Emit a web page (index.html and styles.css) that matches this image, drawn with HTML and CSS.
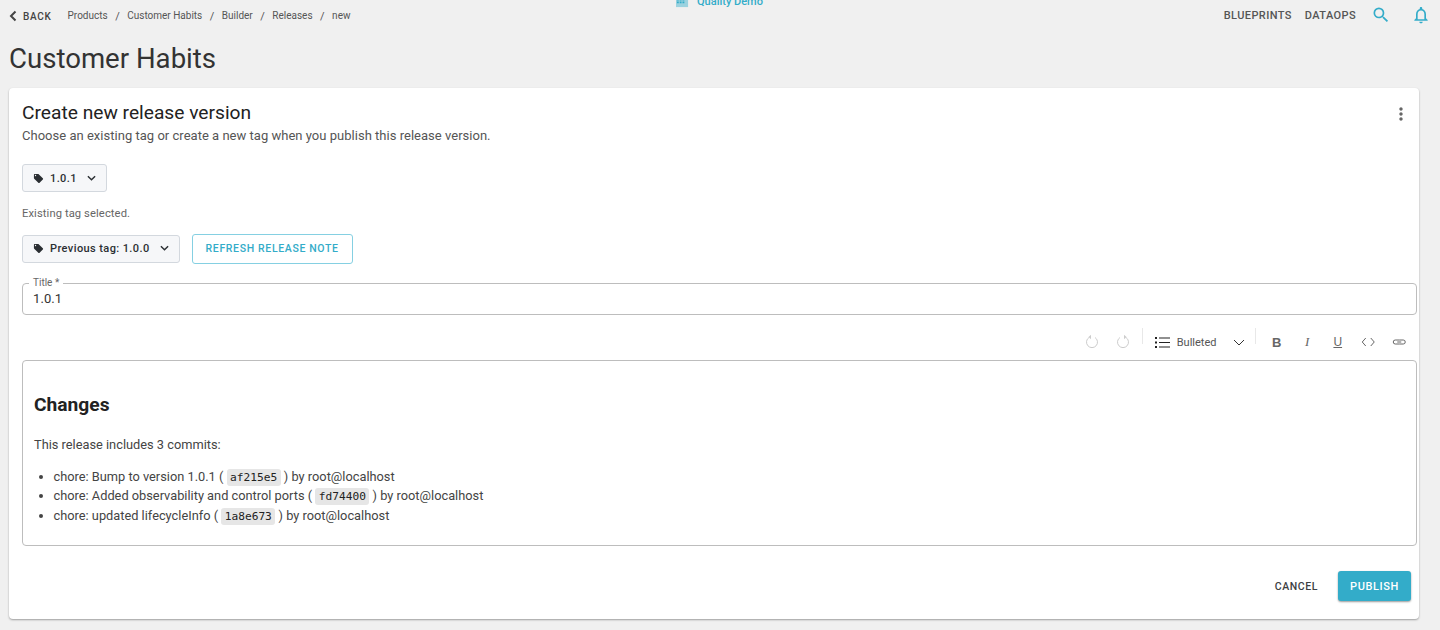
FILE: index.html
```html
<!DOCTYPE html>
<html lang="en">
<head>
<meta charset="utf-8">
<title>Customer Habits</title>
<link rel="stylesheet" href="styles.css">
</head>
<body>
<header class="topbar">
  <div class="nav-left">
    <a class="back"><svg class="back-icon" viewBox="0 0 8 12"><path d="M6.5 1.5 2 6l4.500 4.500" fill="none" stroke="currentColor" stroke-width="2"/></svg>BACK</a>
    <nav class="crumbs"><span>Products</span><i>/</i><span>Customer Habits</span><i>/</i><span>Builder</span><i>/</i><span>Releases</span><i>/</i><span>new</span></nav>
  </div>
  <div class="env">
    <svg class="env-icon" viewBox="0 0 14 14"><path fill="currentColor" d="M0 0h13v13H0z" opacity=".45"/><path fill="currentColor" d="M1 1h2v2H1zM4 1h2v2H4zM7 1h2v2H7zM10 1h2v2h-2zM1 4h2v2H1zM4 4h2v2H4zM7 4h2v2H7zM1 7h2v2H1zM4 7h2v2H4zM7 7h2v2H7z"/></svg>
    <span>Quality Demo</span>
  </div>
  <div class="nav-right">
    <a class="nav-link">BLUEPRINTS</a>
    <a class="nav-link">DATAOPS</a>
    <svg class="search" viewBox="0 0 24 24"><path fill="currentColor" d="M15.500 14h-.79l-.28-.27A6.470 6.470 0 0 0 16 9.500 6.500 6.500 0 1 0 9.500 16c1.610 0 3.090-.59 4.230-1.570l.27.28v.79l5 4.990L20.490 19l-4.990-5zm-6 0C7.010 14 5 11.990 5 9.500S7.010 5 9.500 5 14 7.010 14 9.500 11.990 14 9.500 14z"/></svg>
    <svg class="bell" viewBox="0 0 24 24"><path fill="currentColor" d="M12 22c1.100 0 2-.9 2-2h-4c0 1.100.9 2 2 2zm6-6v-5c0-3.070-1.630-5.640-4.500-6.320V4c0-.83-.67-1.500-1.500-1.500s-1.500.67-1.500 1.500v.68C7.640 5.360 6 7.920 6 11v5l-2 2v1h16v-1l-2-2zm-2 1H8v-6c0-2.480 1.510-4.500 4-4.500s4 2.020 4 4.500v6z"/></svg>
  </div>
</header>

<h1 class="page-title">Customer Habits</h1>

<main class="card">
  <div class="card-head">
    <div>
      <h2 class="card-title">Create new release version</h2>
      <p class="card-sub">Choose an existing tag or create a new tag when you publish this release version.</p>
    </div>
    <svg class="more" viewBox="0 0 24 24"><path fill="currentColor" d="M12 8c1.100 0 2-.9 2-2s-.9-2-2-2-2 .9-2 2 .9 2 2 2zm0 2c-1.100 0-2 .9-2 2s.9 2 2 2 2-.9 2-2-.9-2-2-2zm0 6c-1.100 0-2 .9-2 2s.9 2 2 2 2-.9 2-2-.9-2-2-2z"/></svg>
  </div>

  <button class="tag-btn tag-first">
    <svg class="tag-icon" viewBox="0 0 24 24"><path fill="currentColor" d="M21.410 11.580l-9-9C12.050 2.220 11.550 2 11 2H4c-1.100 0-2 .9-2 2v7c0 .55.22 1.050.59 1.420l9 9c.36.36.86.58 1.410.58.55 0 1.050-.22 1.410-.59l7-7c.37-.36.59-.86.59-1.410 0-.55-.23-1.060-.59-1.420zM5.500 7C4.670 7 4 6.330 4 5.500S4.670 4 5.500 4 7 4.670 7 5.500 6.330 7 5.500 7z"/></svg>
    <span>1.0.1</span>
    <svg class="tag-caret" viewBox="0 0 10 6"><path d="M1 1l4 4 4-4" fill="none" stroke="currentColor" stroke-width="1.600"/></svg>
  </button>

  <p class="hint">Existing tag selected.</p>

  <div class="tag-row">
    <button class="tag-btn tag-prev">
      <svg class="tag-icon" viewBox="0 0 24 24"><path fill="currentColor" d="M21.410 11.580l-9-9C12.050 2.220 11.550 2 11 2H4c-1.100 0-2 .9-2 2v7c0 .55.22 1.050.59 1.420l9 9c.36.36.86.58 1.410.58.55 0 1.050-.22 1.410-.59l7-7c.37-.36.59-.86.59-1.410 0-.55-.23-1.060-.59-1.420zM5.500 7C4.670 7 4 6.330 4 5.500S4.670 4 5.500 4 7 4.670 7 5.500 6.330 7 5.500 7z"/></svg>
      <span>Previous tag: 1.0.0</span>
      <svg class="tag-caret" viewBox="0 0 10 6"><path d="M1 1l4 4 4-4" fill="none" stroke="currentColor" stroke-width="1.600"/></svg>
    </button>
    <button class="refresh">REFRESH RELEASE NOTE</button>
  </div>

  <fieldset class="title-field">
    <legend>Title *</legend>
    <span class="title-value">1.0.1</span>
  </fieldset>

  <div class="toolbar">
    <div class="tool-group history">
      <svg class="tool tool-dim" viewBox="0 0 16 16"><path d="M5 3.500a5.500 5.500 0 1 0 6 0" fill="none" stroke="currentColor"/><path d="M7 .8v4.400L4.500 3z" fill="currentColor"/></svg>
      <svg class="tool tool-dim" viewBox="0 0 16 16"><path d="M11 3.500a5.500 5.500 0 1 1-6 0" fill="none" stroke="currentColor"/><path d="M9 .8v4.400L11.500 3z" fill="currentColor"/></svg>
    </div>
    <div class="tool-group block">
      <svg class="list-icon" viewBox="0 0 15 11"><path fill="currentColor" d="M0 0h2v2H0zM0 4.500h2v2H0zM0 9h2v2H0zM4 .5h11v1H4zM4 5h11v1H4zM4 9.500h11v1H4z"/></svg>
      <span class="block-label">Bulleted</span>
      <svg class="block-caret" viewBox="0 0 12 7"><path d="M1 1l5 5 5-5" fill="none" stroke="currentColor"/></svg>
    </div>
    <div class="tool-group marks">
      <b class="mark mark-b">B</b>
      <i class="mark mark-i">I</i>
      <u class="mark mark-u">U</u>
      <svg class="mark-svg" viewBox="0 0 14 10"><path d="M4.500 1 1 5l3.500 4M9.500 1 13 5 9.500 9" fill="none" stroke="currentColor"/></svg>
      <svg class="mark-svg" viewBox="0 0 14 10"><path d="M7 3H3a2 2 0 0 0 0 4h4M7 7h4a2 2 0 0 0 0-4H7" fill="none" stroke="currentColor"/><path d="M5 5h4" fill="none" stroke="currentColor"/></svg>
    </div>
  </div>

  <section class="editor">
    <h3 class="editor-h">Changes</h3>
    <p class="editor-p">This release includes 3 commits:</p>
    <ul class="editor-list">
      <li>chore: Bump to version 1.0.1 ( <code>af215e5</code> ) by root@localhost</li>
      <li>chore: Added observability and control ports ( <code>fd74400</code> ) by root@localhost</li>
      <li>chore: updated lifecycleInfo ( <code>1a8e673</code> ) by root@localhost</li>
    </ul>
  </section>

  <div class="actions">
    <button class="cancel">CANCEL</button>
    <button class="publish">PUBLISH</button>
  </div>
</main>
</body>
</html>
```

FILE: styles.css
```css
* { box-sizing: border-box; }
html, body { height: 100%; }
body {
  margin: 0;
  background: #f0f0f0;
  font-family: Roboto, "Liberation Sans", sans-serif;
  color: #333;
  overflow: hidden;
}
button { font-family: inherit; cursor: pointer; }

.topbar {
  position: relative;
  display: flex;
  justify-content: space-between;
  align-items: center;
  height: 32px;
  padding: 0 9px;
}
.nav-left { display: flex; align-items: center; }
.back {
  display: flex;
  align-items: center;
  font-size: 10px;
  font-weight: 500;
  letter-spacing: .7px;
  color: #444;
}
.back-icon { width: 8px; height: 12px; margin-right: 6px; }
.crumbs {
  display: flex;
  margin-left: 16px;
  font-size: 10px;
  color: #555;
}
.crumbs i { font-style: normal; margin: 0 7.500px; font-size: 11px; }
.env {
  position: absolute;
  left: 676px;
  top: -5px;
  display: flex;
  align-items: center;
  gap: 8px;
  font-size: 11px;
  font-weight: 500;
  color: #33acc9;
}
.env-icon { width: 13px; height: 13px; }
.nav-right { display: flex; align-items: center; padding-bottom: 2px; }
.nav-link {
  font-size: 11px;
  font-weight: 500;
  letter-spacing: .4px;
  color: #555;
  margin-right: 13px;
}
.search { width: 20px; height: 20px; color: #33acc9; margin-left: 2px; }
.bell { width: 20px; height: 20px; color: #33acc9; margin-left: 20px; }

.page-title {
  margin: 10px 9px 12px;
  font-size: 27.600px;
  line-height: 34px;
  font-weight: 400;
  color: #333;
}

.card {
  margin: 0 21px 0 9px;
  height: 531px;
  padding: 13px 2px 0 13px;
  background: #fff;
  border-radius: 4px;
  box-shadow: 0 1px 2px rgba(0,0,0,.35);
}
.card-head { display: flex; justify-content: space-between; align-items: flex-start; }
.card-title { margin: 0; font-size: 19.200px; line-height: 24px; font-weight: 400; color: #222; }
.card-sub { margin: 2px 0 0; font-size: 13px; letter-spacing: .02px; line-height: 18px; color: #555; }
.more { width: 20px; height: 20px; color: #666; margin: 3px 6px 0 0; }

.tag-btn {
  display: inline-flex;
  align-items: center;
  height: 28px;
  padding: 0 10px;
  border: 1px solid #d3d8de;
  border-radius: 3px;
  background: #f6f7f9;
  font-size: 11px;
  font-weight: 500;
  letter-spacing: .4px;
  color: #2b2f33;
}
.tag-first { margin-top: 19px; display: flex; }
.tag-prev { padding-bottom: 2px; }
.tag-icon { width: 11px; height: 11px; margin-right: 6px; }
.tag-caret { width: 9px; height: 6px; margin-left: 10px; }

.hint { margin: 15px 0 0; font-size: 11.200px; letter-spacing: .1px; line-height: 14px; color: #666; }
.tag-row { display: flex; align-items: center; gap: 12px; margin-top: 13px; }
.refresh {
  height: 30px;
  padding: 0 13px 2px;
  background: #fff;
  border: 1px solid #85d0e2;
  border-radius: 3px;
  color: #33acc9;
  font-size: 10.500px;
  font-weight: 500;
  letter-spacing: .65px;
}

.title-field {
  margin: 13px 0 0;
  padding: 0 6px;
  height: 38px;
  border: 1px solid #bdbdbd;
  border-radius: 4px;
  min-width: 0;
}
.title-field legend { padding: 0 4px; font-size: 10px; line-height: 12px; color: #666; }
.title-value { display: block; margin: 1px 0 0 4px; font-size: 13px; letter-spacing: .1px; color: #333; line-height: 18px; }

.toolbar {
  display: flex;
  justify-content: flex-end;
  align-items: center;
  height: 32px;
  margin: 11px 3px 0 0;
  color: #666;
}
.tool-group { display: flex; align-items: center; }
.history { position: relative; gap: 15px; padding-right: 12px; height: 20px; }
.history::after, .block::after {
  content: "";
  position: absolute;
  right: 0;
  top: -4px;
  height: 16px;
  border-right: 1px solid #e8e8e8;
}
.tool { width: 16px; height: 16px; }
.tool-dim { color: #ccc; }
.block { position: relative; padding: 0 11px 0 12px; height: 20px; }
.list-icon { width: 15px; height: 11px; color: #222; }
.block-label { margin-left: 7px; font-size: 11px; color: #555; }
.block-caret { width: 12px; height: 7px; margin-left: 16px; color: #333; }
.marks { gap: 0; padding-left: 6px; }
.mark { display: block; width: 30.500px; text-align: center; font-size: 12px; color: #666; font-style: normal; font-family: "Liberation Sans", sans-serif; }
.mark-b { font-weight: 700; font-size: 13px; }
.mark-i { font-style: italic; font-size: 13px; font-family: "Liberation Serif", serif; }
.mark-svg { width: 30.500px; height: 10px; padding: 0 8px; color: #666; }

.editor {
  margin: 2px 0 0;
  height: 186px;
  padding: 29px 11px 0;
  border: 1px solid #bdbdbd;
  border-radius: 4px;
}
.editor-h { margin: 0; font-size: 19.200px; line-height: 30px; font-weight: 700; color: #222; }
.editor-p { margin: 15px 0 0; font-size: 12.800px; line-height: 20px; color: #444; }
.editor-list { margin: 12px 0 0; padding: 0 0 0 19.500px; font-size: 12.800px; line-height: 19.300px; color: #444; }
code {
  font-family: "DejaVu Sans Mono", monospace;
  font-size: 11.200px;
  line-height: 1;
  padding: 2px 3.500px;
  background: #e6e6e6;
  border-radius: 3px;
  color: #222;
}

.actions { display: flex; justify-content: flex-end; align-items: center; gap: 8px; margin: 25px 6px 0 0; }
.cancel {
  height: 30px;
  padding: 0 12px;
  background: none;
  border: 0;
  font-size: 10.500px;
  font-weight: 500;
  letter-spacing: .6px;
  color: #3c4043;
}
.publish {
  height: 30px;
  padding: 0 12px;
  background: #33acc9;
  border: 0;
  border-radius: 3px;
  font-size: 11px;
  font-weight: 500;
  letter-spacing: .6px;
  color: #fff;
  box-shadow: 0 1px 2px rgba(0,0,0,.4);
}
```
